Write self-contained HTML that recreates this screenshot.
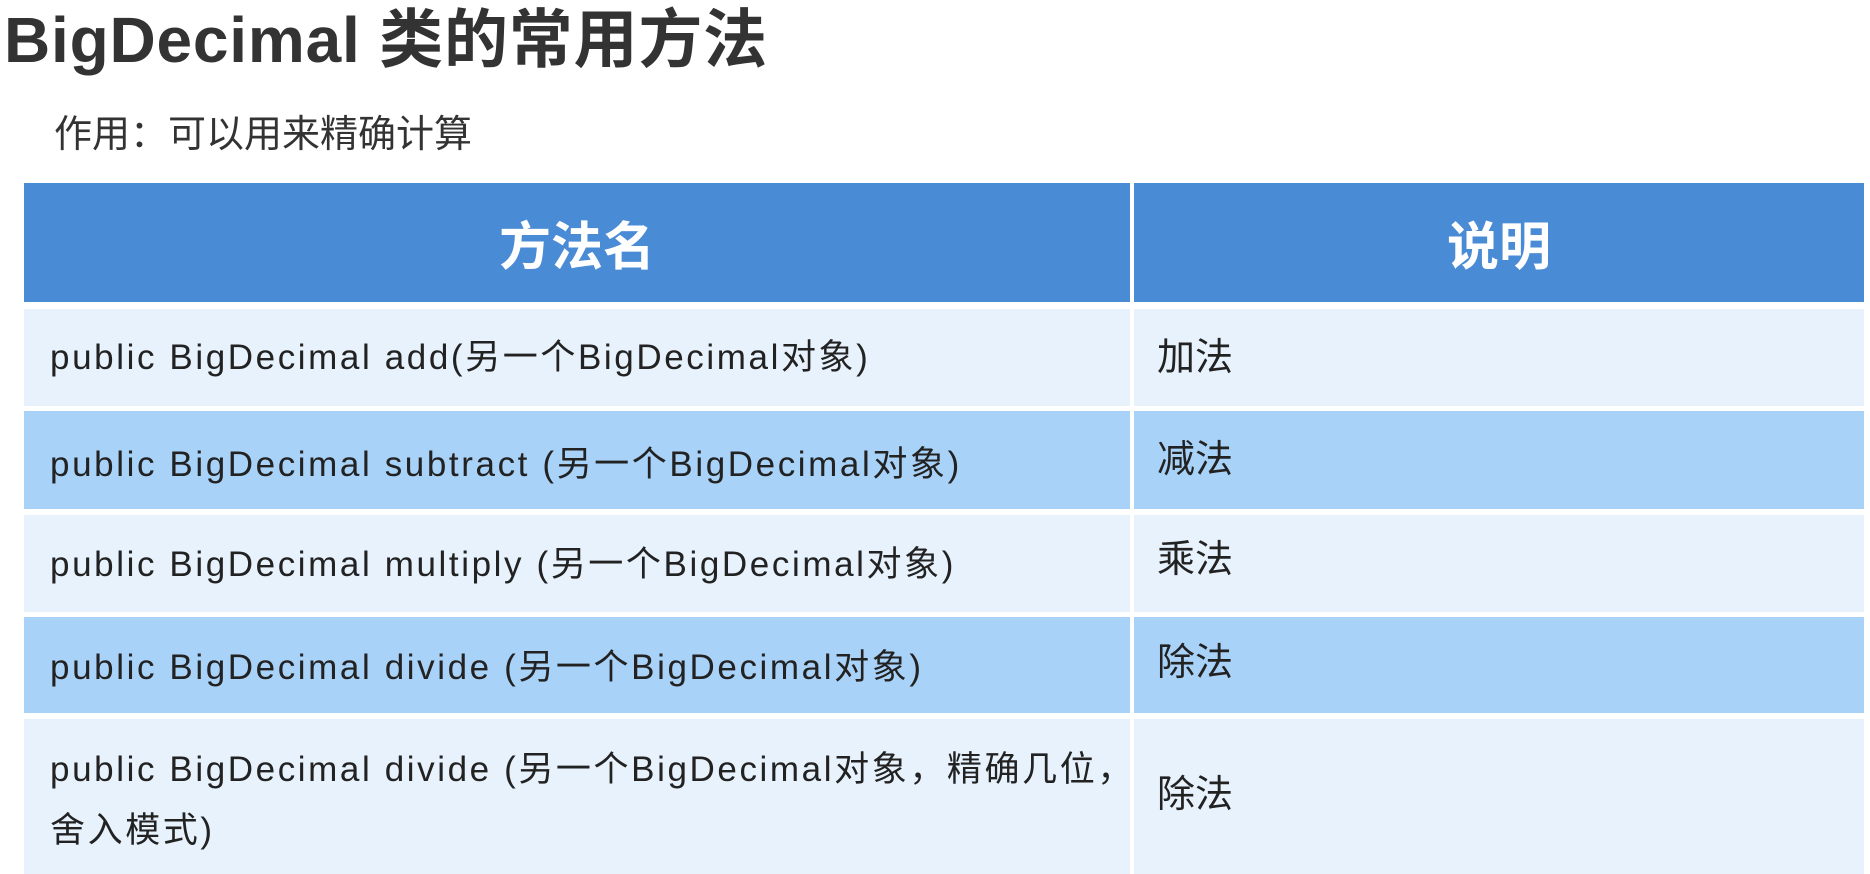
<!DOCTYPE html>
<html><head><meta charset="utf-8"><style>
body{margin:0;width:1870px;height:874px;background:#fff;position:relative;overflow:hidden;font-family:"Liberation Sans","Noto Sans CJK SC",sans-serif;}
.a{position:absolute;white-space:nowrap;}
.t{left:4px;top:3px;font-size:64px;font-weight:bold;color:#333;line-height:74px;letter-spacing:0.8px;}
.s{left:54px;top:112px;font-size:38px;color:#333;line-height:46px;}
.c{position:absolute;}
.h{background:#4a8bd6;color:#fff;font-weight:bold;font-size:52px;display:flex;align-items:center;justify-content:center;}
.l{background:#e7f2fc;}
.d{background:#a9d2f9;}
.x{position:absolute;font-size:35px;letter-spacing:2.6px;color:#222;white-space:nowrap;line-height:44px;}
.r{position:absolute;font-size:38px;color:#222;white-space:nowrap;line-height:44px;}
</style></head><body>
<div class="a t">BigDecimal 类的常用方法</div>
<div class="a s">作用：可以用来精确计算</div>

<div class="c h" style="left:24px;top:183px;width:1106px;height:119px;">方法名</div>
<div class="c h" style="left:1134px;top:183px;width:730px;height:119px;">说明</div>

<div class="c l" style="left:24px;top:309px;width:1106px;height:97px;"></div>
<div class="c l" style="left:1134px;top:309px;width:730px;height:97px;"></div>
<div class="c d" style="left:24px;top:411px;width:1106px;height:98px;"></div>
<div class="c d" style="left:1134px;top:411px;width:730px;height:98px;"></div>
<div class="c l" style="left:24px;top:515px;width:1106px;height:97px;"></div>
<div class="c l" style="left:1134px;top:515px;width:730px;height:97px;"></div>
<div class="c d" style="left:24px;top:617px;width:1106px;height:96px;"></div>
<div class="c d" style="left:1134px;top:617px;width:730px;height:96px;"></div>
<div class="c l" style="left:24px;top:719px;width:1106px;height:155px;"></div>
<div class="c l" style="left:1134px;top:719px;width:730px;height:155px;"></div>

<div class="x" style="left:50px;top:336px;">public BigDecimal add(另一个BigDecimal对象)</div>
<div class="r" style="left:1157px;top:336px;">加法</div>
<div class="x" style="left:50px;top:443px;">public BigDecimal subtract (另一个BigDecimal对象)</div>
<div class="r" style="left:1157px;top:438px;">减法</div>
<div class="x" style="left:50px;top:543px;">public BigDecimal multiply (另一个BigDecimal对象)</div>
<div class="r" style="left:1157px;top:538px;">乘法</div>
<div class="x" style="left:50px;top:646px;">public BigDecimal divide (另一个BigDecimal对象)</div>
<div class="r" style="left:1157px;top:641px;">除法</div>
<div class="x" style="left:50px;top:748px;">public BigDecimal divide (另一个BigDecimal对象，精确几位，</div>
<div class="x" style="left:50px;top:809px;">舍入模式)</div>
<div class="r" style="left:1157px;top:773px;">除法</div>
</body></html>
